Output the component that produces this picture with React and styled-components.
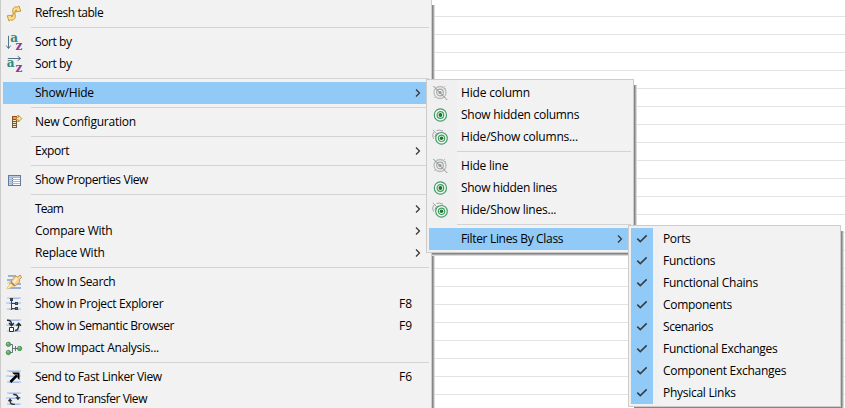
import React from "react";
import styled, { createGlobalStyle } from "styled-components";

const GlobalStyle = createGlobalStyle`
  * { box-sizing: border-box; }
  body { margin: 0; overflow: hidden; background: #fff; }
`;

const Screen = styled.main`
  position: relative;
  width: 845px;
  height: 408px;
  overflow: hidden;
  background: #fff;
  color: #000;
  font-family: "Open Sans", "Noto Sans", sans-serif;
  font-size: 12px;
`;

const TableLines = styled.div`
  height: 100%;
  background: repeating-linear-gradient(
    to bottom, transparent 0, transparent 16px, #e3e3e3 16px, #e3e3e3 17px, transparent 17px, transparent 18px
  );
`;

const MenuPanel = styled.div`
  position: absolute;
  left: ${(p) => p.$x}px;
  top: ${(p) => p.$y}px;
  width: ${(p) => p.$w}px;
  padding: 2px;
  border: 1px solid #ccc;
  background: linear-gradient(to right, #f0f0f0 30px, #f2f2f2 30px);
  box-shadow: 1px 1px 0 #858585, 2px 2px 0 #a9a9a9, 3px 3px 0 #dadada;
  clip-path: polygon(0 0, 100% 0, 100% 6px, calc(100% + 5px) 6px, calc(100% + 5px) calc(100% + 5px), 6px calc(100% + 5px), 6px 100%, 0 100%);
`;

const Row = styled.div`
  display: flex;
  align-items: center;
  height: 22px;
  background: ${(p) => (p.$active ? "#91c9f7" : "transparent")};
`;

const IconCell = styled.span`
  display: flex;
  align-items: center;
  justify-content: center;
  flex: none;
  width: 22px;
  height: 22px;
  margin-right: 10px;
  background: ${(p) => (p.$checked ? "#91c9f7" : "transparent")};
  svg { display: block; overflow: visible; }
`;

const Label = styled.span`
  flex: 1;
  white-space: nowrap;
  line-height: 22px;
  letter-spacing: ${(p) => p.$track}px;
`;

const Shortcut = styled.span`
  width: 30px;
  line-height: 22px;
`;

const Arrow = styled.svg`
  width: 6px;
  height: 10px;
  margin-right: 8px;
`;

const Separator = styled.hr`
  height: 1px;
  margin: 3px 0 3px 28px;
  border: 0;
  background: #d3d3d3;
`;

const SortLetters = styled.text`
  font-family: "DejaVu Serif", serif;
  font-weight: 700;
  font-size: 12px;
`;

const Svg = ({ children, crisp }) => (
  <svg width="16" height="16" viewBox="0 0 16 16" fill="none" shapeRendering={crisp ? "crispEdges" : "auto"}>
    {children}
  </svg>
);

const Stripes = () => (
  <g fill="#b9cff0">
    <path d="M1 1h14v2H1zM0 6h15v2H0zM1 12h14v2H1z" opacity=".8" />
    <path d="M3 2h10v1H3zM3 7h10v1H3zM3 13h10v1H3z" fill="#8facdf" opacity=".6" />
  </g>
);

const Refresh = () => (
  <Svg>
    <g fill="#fbdf86" stroke="#bd8428" strokeWidth=".8" strokeLinejoin="round">
      <path d="M8.7 9.3 6.8 7.4V4.6C7.4 2.4 9.4 1.3 11.6 2.1L13 .9l1.8 5.3-5.4.7 1.3-1.6c-1-.4-1.5 0-1.5 1z" />
      <path d="M7.3 7.7l1.9 1.9v2.8c-.6 2.2-2.6 3.3-4.8 2.5L3 16.1 1.2 10.8l5.4-.7-1.3 1.6c1 .4 1.5 0 1.5-1z" />
    </g>
  </Svg>
);

const SortDown = () => (
  <Svg>
    <path d="M2.5 1.8v12.4M.3 11.6l2.2 2.9 2.2-2.9" stroke="#577084" />
    <SortLetters>
      <tspan x="4.2" y="7.5" fill="#2e8a7e">a</tspan>
      <tspan x="9.5" y="16" fill="#8b3b91">z</tspan>
    </SortLetters>
  </Svg>
);

const SortRight = () => (
  <Svg>
    <path d="M1.8 2.5h12.6M11.7.3l2.9 2.2-2.9 2.2" stroke="#577084" />
    <SortLetters>
      <tspan x=".7" y="11.3" fill="#2e8a7e">a</tspan>
      <tspan x="9.5" y="16" fill="#8b3b91">z</tspan>
    </SortLetters>
  </Svg>
);

const NewConfig = () => (
  <Svg crisp>
    <path d="M6 2h5v12H6z" fill="#6d5a3f" />
    <path d="M7 6h3v1H7zM7 8h3v1H7zM7 10h3v1H7zM7 12h3v1H7z" fill="#f6e7bf" />
    <path d="M6 2h5v1H6z" fill="#a6481f" />
    <path d="M7 3h3v2H7z" fill="#ee9a50" />
    <path shapeRendering="auto" d="M10.5 3.4h2V1.3L15.8 4.6 12.5 8V5.9h-2z" fill="#fbe7a6" stroke="#b98a2e" strokeWidth=".9" />
    <path d="M11 1h1v1h-1zM11 7h1v1h-1z" fill="#d5a849" />
  </Svg>
);

const Properties = () => (
  <Svg crisp>
    <path d="M2 3h13v11H2z" fill="#647ba0" />
    <path d="M3 4h11v1H3z" fill="#b9c8df" />
    <path d="M3 6h3v1H3zM3 8h3v1H3zM3 10h3v1H3zM3 12h3v1H3z" fill="#c6d0e0" />
    <path d="M7 6h7v1H7zM7 8h7v1H7zM7 10h7v1H7zM7 12h7v1H7z" fill="#fff" />
    <path d="M3 5h11v1H3zM3 7h11v1H3zM3 9h11v1H3zM3 11h11v1H3z" fill="#a9b9d1" />
  </Svg>
);

const Search = () => (
  <Svg>
    <path d="M2 1h8v2H2zM1 5h13v2H1zM3 9h12v2H3zM2 13h13v2H2z" fill="#8da5d2" opacity=".85" />
    <path d="M.8 14.4 5 8.6l3 3-6 3.4zM1 9.6l3.4-2.4" fill="#fff0a9" stroke="#eeb866" strokeWidth=".8" />
    <path d="M5 7.3 9.3 2l2.4.8L14.2 1l1.4 2.2-2 2.4v2.6l-4.8 4-3.6-2.4z" fill="#f5cf93" stroke="#c18a42" strokeWidth=".8" />
    <path d="m6.4 8 4-4.4 1.4 1.4-4 5z" fill="#fff0c5" />
    <path d="m4.8 7.6 4 4" stroke="#7d8594" strokeWidth="1.2" />
  </Svg>
);

const Explorer = () => (
  <Svg crisp>
    <Stripes />
    <path d="M5.5 4v10M5 7.5h5M5 12.5h5" stroke="#39434c" />
    <path d="M4 2h3v3H4zM9 6h3v3H9zM9 11h3v3H9z" fill="#39434c" />
    <path d="M10 7h1v1h-1zM10 12h1v1h-1z" fill="#68788a" />
  </Svg>
);

const Semantic = () => (
  <Svg>
    <Stripes />
    <path d="M1 2.2c3.3-.2 4.6 1.2 4.6 5M3 5l2.6 2.6L7.8 5M9 12.5c3.3 0 3.8-2.5 3.8-6M10.4 7.8l2.3-2.6L15 7.8" stroke="#252c31" strokeWidth="1.4" />
    <path d="M3.5 9.5h4v4h-4z" fill="#fff" stroke="#252c31" />
  </Svg>
);

const Impact = () => (
  <Svg>
    <path d="M4 4.5h2.5v8H4M6.5 8.5H12M9.5 6v5" stroke="#65717a" />
    <g fill="#5eac66" stroke="#388143" strokeWidth=".7">
      <circle cx="2.4" cy="4.3" r="2.2" /><circle cx="2.4" cy="12.5" r="2.2" /><circle cx="13.6" cy="8.5" r="2.2" />
    </g>
    <g fill="#a0d69f"><circle cx="1.9" cy="3.6" r=".8" /><circle cx="1.9" cy="11.8" r=".8" /><circle cx="13.1" cy="7.8" r=".8" /></g>
  </Svg>
);

const Linker = () => (
  <Svg>
    <Stripes />
    <path d="M4.4 13 11 6.4" stroke="#000" strokeWidth="2.6" />
    <path d="M6 3.5h7.5V11l-2-2V5.5H8z" fill="#000" />
  </Svg>
);

const Transfer = () => (
  <Svg>
    <Stripes />
    <path d="M7.2 3.6c3.6-.3 4.8 1.5 4.8 4M8.8 13.4c-3.7.2-4.8-1.3-4.8-4.2" stroke="#252c31" strokeWidth="1.4" />
    <path d="M9.4 6.2h5L12 9.2zM1.7 10.2 4 7.2l2.5 3z" fill="#252c31" />
  </Svg>
);

const HideEye = () => (
  <Svg>
    <circle cx="8" cy="7.5" r="6" stroke="#b9bdbb" strokeWidth="1.3" />
    <circle cx="8" cy="7.5" r="3.3" stroke="#a3a7a5" strokeWidth="1.2" />
    <circle cx="8" cy="7.5" r="1.5" fill="#8f9492" />
    <path d="m1.3 1 14 14" stroke="#8f9492" />
    <path d="M12 1h1v1h-1zM2 12h1v1H2zM13 3h1v1h-1z" fill="#dba9df" />
  </Svg>
);

const ShowEye = () => (
  <Svg>
    <circle cx="8.4" cy="8" r="6.1" fill="#f4fbf5" stroke="#429d68" strokeWidth="1.2" />
    <circle cx="8.4" cy="8" r="3.3" stroke="#429d68" strokeWidth="1.2" />
    <circle cx="8.4" cy="8" r="1.9" fill="#24751c" />
  </Svg>
);

const ToggleEye = () => (
  <Svg>
    <path d="M.8.8l5 5M1 8.5a5.6 5.6 0 0 1 1-5.5M4.5 1.5a6 6 0 0 1 6 .8M3 8a4 4 0 0 1 4-4" stroke="#a3a7a5" />
    <path d="M9 1h2v1H9zM1 8h1v2H1z" fill="#dba9df" />
    <circle cx="9.5" cy="9.3" r="5.8" fill="#f4fbf5" stroke="#429d68" strokeWidth="1.2" />
    <circle cx="9.5" cy="9.3" r="3.2" stroke="#429d68" strokeWidth="1.2" />
    <circle cx="9.5" cy="9.3" r="1.8" fill="#24751c" />
  </Svg>
);

const Check = () => (
  <Svg><path d="m3.3 7.6 3 3 6.4-6.2" stroke="#333b42" strokeWidth="1.5" /></Svg>
);

const SEP = null;

const mainItems = [
  { label: "Refresh table", icon: Refresh, track: -0.45 },
  SEP,
  { label: "Sort by", icon: SortDown, track: -0.4 },
  { label: "Sort by", icon: SortRight, track: -0.4 },
  SEP,
  { label: "Show/Hide", submenu: true, active: true, track: -0.22 },
  SEP,
  { label: "New Configuration", icon: NewConfig, track: -0.22 },
  SEP,
  { label: "Export", submenu: true, track: -0.42 },
  SEP,
  { label: "Show Properties View", icon: Properties, track: -0.4 },
  SEP,
  { label: "Team", submenu: true, track: -0.75 },
  { label: "Compare With", submenu: true, track: -0.25 },
  { label: "Replace With", submenu: true, track: -0.25 },
  SEP,
  { label: "Show In Search", icon: Search, track: -0.36 },
  { label: "Show in Project Explorer", icon: Explorer, shortcut: "F8", track: -0.34 },
  { label: "Show in Semantic Browser", icon: Semantic, shortcut: "F9", track: -0.38 },
  { label: "Show Impact Analysis...", icon: Impact, track: -0.25 },
  SEP,
  { label: "Send to Fast Linker View", icon: Linker, shortcut: "F6", track: -0.37 },
  { label: "Send to Transfer View", icon: Transfer, track: -0.48 },
];

const visibilityItems = [
  { label: "Hide column", icon: HideEye, track: -0.18 },
  { label: "Show hidden columns", icon: ShowEye, track: -0.28 },
  { label: "Hide/Show columns...", icon: ToggleEye, track: -0.2 },
  SEP,
  { label: "Hide line", icon: HideEye, track: -0.22 },
  { label: "Show hidden lines", icon: ShowEye, track: -0.34 },
  { label: "Hide/Show lines...", icon: ToggleEye, track: -0.22 },
  SEP,
  { label: "Filter Lines By Class", submenu: true, active: true, track: -0.33 },
];

const classItems = [
  ["Ports", -0.4],
  ["Functions", -0.22],
  ["Functional Chains", -0.24],
  ["Components", -0.3],
  ["Scenarios", -0.44],
  ["Functional Exchanges", -0.3],
  ["Component Exchanges", -0.27],
  ["Physical Links", -0.28],
].map(([label, track]) => ({ label, track, icon: Check, checked: true }));

function Menu({ items, x, y, w }) {
  return (
    <MenuPanel $x={x} $y={y} $w={w}>
      {items.map((item, i) => {
        if (!item) return <Separator key={i} />;
        const Icon = item.icon;
        return (
          <Row key={i} $active={item.active}>
            <IconCell $checked={item.checked}>{Icon && <Icon />}</IconCell>
            <Label $track={item.track ?? 0}>{item.label}</Label>
            {item.shortcut && <Shortcut>{item.shortcut}</Shortcut>}
            {item.submenu && (
              <Arrow viewBox="0 0 6 10" fill="none">
                <path d="m1 1.5 3.5 3.5L1 8.5" stroke="#333" strokeWidth="1.2" />
              </Arrow>
            )}
          </Row>
        );
      })}
    </MenuPanel>
  );
}

export default function App() {
  return (
    <>
      <GlobalStyle />
      <Screen>
        <TableLines />
        <Menu items={mainItems} x={0} y={-1} w={432} />
        <Menu items={visibilityItems} x={426} y={79} w={208} />
        <Menu items={classItems} x={628} y={225} w={213} />
      </Screen>
    </>
  );
}
